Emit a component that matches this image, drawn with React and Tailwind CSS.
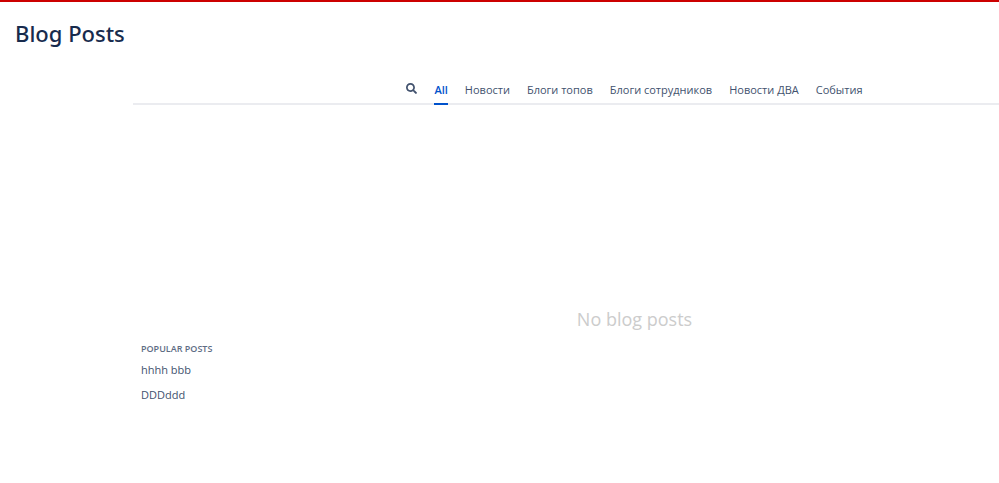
import { useState } from "react";
import { FaSearch } from "react-icons/fa";

const tabs = [
  "All",
  "Новости",
  "Блоги топов",
  "Блоги сотрудников",
  "Новости ДВА",
  "События",
];

const popularPosts = ["hhhh bbb", "DDDddd"];

export default function App() {
  const [active, setActive] = useState("All");

  return (
    <div className="border-t-2 border-[#cc0000] bg-white font-['Open_Sans','Noto_Sans',sans-serif] text-[#42526e]">
      <h1 className="px-[15px] pt-[15px] font-['Noto_Sans','Open_Sans',sans-serif] text-[22px] leading-8 font-medium text-[#172b4d]">
        Blog Posts
      </h1>

      <main className="pt-[30px] pl-[133px]">
        <nav className="flex items-start justify-center gap-[17px] border-b-2 border-[#ebecf0] pl-[137px] text-[11px]">
          <button type="button" aria-label="Search" className="pt-1">
            <FaSearch className="h-[11px] w-[11px]" />
          </button>
          {tabs.map((tab) => (
            <Tab
              key={tab}
              label={tab}
              active={tab === active}
              onClick={() => setActive(tab)}
            />
          ))}
        </nav>

        <p className="pt-[202px] pl-[137px] text-center text-lg leading-6 text-[#cccccc]">
          No blog posts
        </p>

        <PopularPosts />
      </main>
    </div>
  );
}

function Tab({ label, active, onClick }) {
  return (
    <button
      type="button"
      onClick={onClick}
      className={
        active
          ? "-mb-0.5 border-b-2 border-[#0052cc] pt-px pb-[3px] leading-5 font-semibold text-[#0052cc]"
          : "pt-px pb-[3px] leading-5"
      }
    >
      {label}
    </button>
  );
}

function PopularPosts() {
  return (
    <section className="px-2 pt-2.5">
      <h2 className="text-[9px] leading-4 font-semibold text-[#5e6c84] uppercase">
        Popular posts
      </h2>
      <ul className="text-[11px]">
        {popularPosts.map((post) => (
          <li key={post} className="leading-[25px]">
            <a href="#">{post}</a>
          </li>
        ))}
      </ul>
    </section>
  );
}
